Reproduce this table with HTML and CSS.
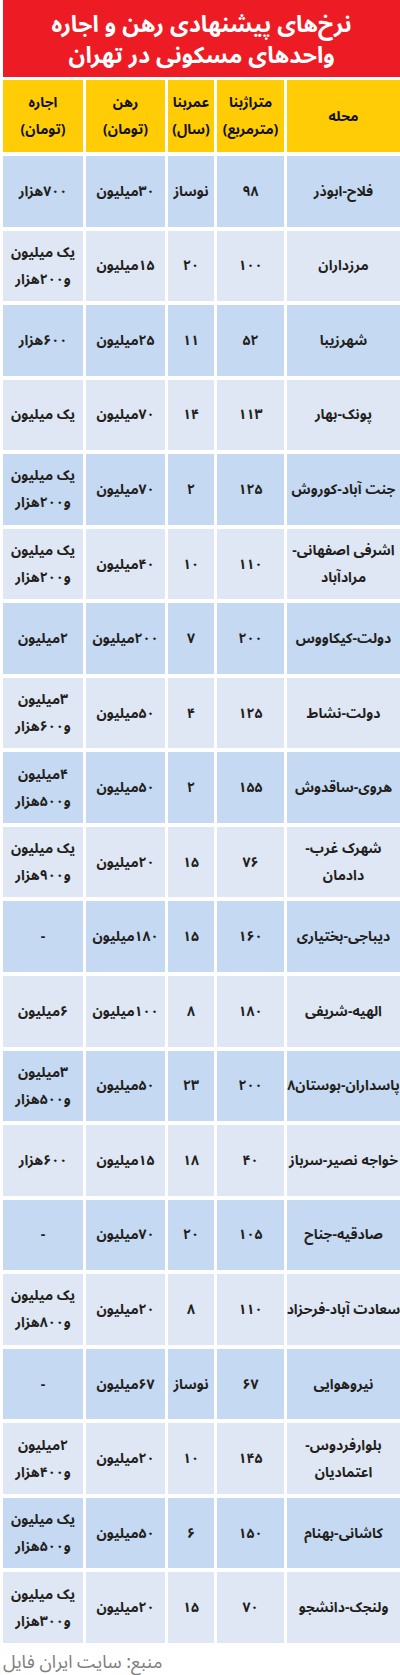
FILE: index.html
```html
<!DOCTYPE html>
<html lang="fa" dir="rtl">
<head>
<meta charset="utf-8">
<title>نرخ‌های پیشنهادی رهن و اجاره</title>
<link rel="stylesheet" href="styles.css">
</head>
<body>
<div class="page">
  <div class="title"><span class="tline">نرخ‌های پیشنهادی رهن و اجاره</span><span class="tline">واحدهای مسکونی در تهران</span></div>
  <div class="table">
    <div class="cell head">محله</div>
    <div class="cell head">متراژبنا<br>(مترمربع)</div>
    <div class="cell head">عمربنا<br>(سال)</div>
    <div class="cell head">رهن<br>(تومان)</div>
    <div class="cell head">اجاره<br>(تومان)</div>

    <div class="cell dark">فلاح-ابوذر</div><div class="cell dark">۹۸</div><div class="cell dark">نوساز</div><div class="cell dark">۳۰میلیون</div><div class="cell dark">۷۰۰هزار</div>
    <div class="cell light">مرزداران</div><div class="cell light">۱۰۰</div><div class="cell light">۲۰</div><div class="cell light">۱۵میلیون</div><div class="cell light">یک میلیون<br>و۲۰۰هزار</div>
    <div class="cell dark">شهرزیبا</div><div class="cell dark">۵۲</div><div class="cell dark">۱۱</div><div class="cell dark">۲۵میلیون</div><div class="cell dark">۶۰۰هزار</div>
    <div class="cell light">پونک-بهار</div><div class="cell light">۱۱۳</div><div class="cell light">۱۴</div><div class="cell light">۷۰میلیون</div><div class="cell light">یک میلیون</div>
    <div class="cell dark">جنت آباد-کوروش</div><div class="cell dark">۱۲۵</div><div class="cell dark">۲</div><div class="cell dark">۷۰میلیون</div><div class="cell dark">یک میلیون<br>و۲۰۰هزار</div>
    <div class="cell light">اشرفی اصفهانی-<br>مرادآباد</div><div class="cell light">۱۱۰</div><div class="cell light">۱۰</div><div class="cell light">۴۰میلیون</div><div class="cell light">یک میلیون<br>و۲۰۰هزار</div>
    <div class="cell dark">دولت-کیکاووس</div><div class="cell dark">۲۰۰</div><div class="cell dark">۷</div><div class="cell dark">۲۰۰میلیون</div><div class="cell dark">۲میلیون</div>
    <div class="cell light">دولت-نشاط</div><div class="cell light">۱۲۵</div><div class="cell light">۴</div><div class="cell light">۵۰میلیون</div><div class="cell light">۳میلیون<br>و۶۰۰هزار</div>
    <div class="cell dark">هروی-ساقدوش</div><div class="cell dark">۱۵۵</div><div class="cell dark">۲</div><div class="cell dark">۵۰میلیون</div><div class="cell dark">۴میلیون<br>و۵۰۰هزار</div>
    <div class="cell light">شهرک غرب-<br>دادمان</div><div class="cell light">۷۶</div><div class="cell light">۱۵</div><div class="cell light">۲۰میلیون</div><div class="cell light">یک میلیون<br>و۹۰۰هزار</div>
    <div class="cell dark">دیباجی-بختیاری</div><div class="cell dark">۱۶۰</div><div class="cell dark">۱۵</div><div class="cell dark">۱۸۰میلیون</div><div class="cell dark">-</div>
    <div class="cell light">الهیه-شریفی</div><div class="cell light">۱۸۰</div><div class="cell light">۸</div><div class="cell light">۱۰۰میلیون</div><div class="cell light">۶میلیون</div>
    <div class="cell dark">پاسداران-بوستان۸</div><div class="cell dark">۲۰۰</div><div class="cell dark">۲۳</div><div class="cell dark">۵۰میلیون</div><div class="cell dark">۳میلیون<br>و۵۰۰هزار</div>
    <div class="cell light">خواجه نصیر-سرباز</div><div class="cell light">۴۰</div><div class="cell light">۱۸</div><div class="cell light">۱۵میلیون</div><div class="cell light">۶۰۰هزار</div>
    <div class="cell dark">صادقیه-جناح</div><div class="cell dark">۱۰۵</div><div class="cell dark">۲۰</div><div class="cell dark">۷۰میلیون</div><div class="cell dark">-</div>
    <div class="cell light">سعادت آباد-فرحزاد</div><div class="cell light">۱۱۰</div><div class="cell light">۸</div><div class="cell light">۲۰میلیون</div><div class="cell light">یک میلیون<br>و۸۰۰هزار</div>
    <div class="cell dark">نیروهوایی</div><div class="cell dark">۶۷</div><div class="cell dark">نوساز</div><div class="cell dark">۶۷میلیون</div><div class="cell dark">-</div>
    <div class="cell light">بلوارفردوس-<br>اعتمادیان</div><div class="cell light">۱۴۵</div><div class="cell light">۱۰</div><div class="cell light">۲۰میلیون</div><div class="cell light">۲میلیون<br>و۴۰۰هزار</div>
    <div class="cell dark">کاشانی-بهنام</div><div class="cell dark">۱۵۰</div><div class="cell dark">۶</div><div class="cell dark">۵۰میلیون</div><div class="cell dark">یک میلیون<br>و۵۰۰هزار</div>
    <div class="cell light">ولنجک-دانشجو</div><div class="cell light">۷۰</div><div class="cell light">۱۵</div><div class="cell light">۲۰میلیون</div><div class="cell light">یک میلیون<br>و۳۰۰هزار</div>
  </div>
  <div class="source">منبع: سایت ایران فایل</div>
</div>
</body>
</html>
```

FILE: styles.css
```css
html, body {
  margin: 0;
  padding: 0;
  background: #ffffff;
}

.page {
  width: 397px;
  margin-left: 3px;
  direction: rtl;
  font-family: "Noto Sans Arabic", "DejaVu Sans", sans-serif;
}

.title {
  height: 77px;
  margin-bottom: 3px;
  background: #ed1c24;
  color: #ffffff;
  font-weight: bold;
  font-size: 23px;
  text-align: center;
  display: flex;
  flex-direction: column;
  align-items: center;
  justify-content: center;
  box-sizing: border-box;
  padding-top: 2px;
}

.tline {
  display: block;
  line-height: 31px;
  white-space: nowrap;
}

.table {
  display: grid;
  grid-template-columns: 113px 67px 46px 79px 80px;
  grid-template-rows: 72px;
  grid-auto-rows: 70.55px;
  column-gap: 3px;
  row-gap: 4px;
}

.cell {
  display: flex;
  align-items: center;
  justify-content: center;
  text-align: center;
  font-size: 14px;
  line-height: 27px;
  color: #231f20;
  font-weight: bold;
  white-space: nowrap;
}

.head {
  background: #ffcc05;
  color: #111111;
}

.dark {
  background: #c5daf2;
}

.light {
  background: #dfe7f4;
}

.source {
  margin-top: 6px;
  text-align: left;
  font-size: 18px;
  line-height: 26px;
  color: #7d7d7d;
}
```
